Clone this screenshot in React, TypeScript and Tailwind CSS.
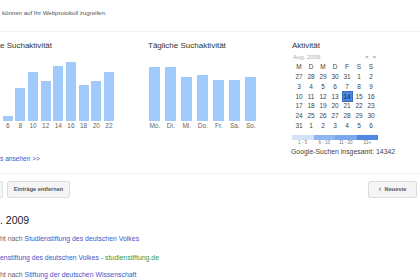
const hourly = [
  { label: "6", h: 5 },
  { label: "8", h: 33 },
  { label: "10", h: 49 },
  { label: "12", h: 40 },
  { label: "14", h: 55 },
  { label: "16", h: 59 },
  { label: "18", h: 36 },
  { label: "20", h: 40 },
  { label: "22", h: 49 },
];

const daily = [
  { label: "Mo.", h: 54 },
  { label: "Di.", h: 54 },
  { label: "Mi.", h: 44 },
  { label: "Do.", h: 46 },
  { label: "Fr.", h: 41 },
  { label: "Sa.", h: 41 },
  { label: "So.", h: 44 },
];

const weekdays = ["M", "D", "M", "D", "F", "S", "S"];
const days = [
  27, 28, 29, 30, 31, 1, 2,
  3, 4, 5, 6, 7, 8, 9,
  10, 11, 12, 13, 14, 15, 16,
  17, 18, 19, 20, 21, 22, 23,
  24, 25, 26, 27, 28, 29, 30,
  31, 1, 2, 3, 4, 5, 6,
];

function Bars({ data, width, gap }: { data: { label: string; h: number }[]; width: string; gap: string }) {
  return (
    <>
      <div className={`flex items-end h-[70.5px] ${gap}`}>
        {data.map((d) => (
          <div key={d.label} className={`${width} bg-[#a1c9f9]`} style={{ height: d.h }} />
        ))}
      </div>
      <div className={`flex h-[10px] ${gap}`}>
        {data.map((d) => (
          <div key={d.label} className={`${width} text-center text-[6.5px] leading-[10px] text-[#666] whitespace-nowrap flex justify-center`}>
            {d.label}
          </div>
        ))}
      </div>
    </>
  );
}

export default function App() {
  return (
    <main className="w-[420px] h-[280px] overflow-hidden bg-white text-[#222] font-['Liberation_Sans',Arial,sans-serif]">
      <div className="h-[32px] border-b border-[#f1f1f1] pt-[9px] pl-[2px] text-[6.1px] leading-[8px] text-[#555]">
        können auf Ihr Webprotokoll zugreifen.
      </div>

      <section className="flex h-[142px] border-b border-[#f1f1f1]">
        <div className="w-[148px] pt-[8.5px]">
          <h3 className="h-[10px] text-[8px] leading-[10px] text-[#333] whitespace-nowrap">e Suchaktivität</h3>
          <div className="pl-[2.7px]">
            <Bars data={hourly} width="w-[10px]" gap="gap-[2.67px]" />
          </div>
          <a className="block mt-[24px] text-[6.6px] leading-[8px] text-[#4455c8]">s ansehen &gt;&gt;</a>
        </div>

        <div className="w-[144px] pt-[8.5px]">
          <h3 className="h-[10px] text-[8px] leading-[10px] text-[#333] whitespace-nowrap">Tägliche Suchaktivität</h3>
          <div className="pl-[1.3px]">
            <Bars data={daily} width="w-[11px]" gap="gap-[5px]" />
          </div>
        </div>

        <div className="w-[110px] pt-[8.5px]">
          <h3 className="h-[10px] text-[8px] leading-[10px] text-[#333]">Aktivität</h3>
          <div className="mt-[2px] ml-[1px] w-[84px] flex justify-between h-[8px] text-[6px] leading-[8px]">
            <span className="text-[#aaa]">Aug. 2009</span>
            <span className="text-[#555] tracking-[1px]">&lt; &gt;</span>
          </div>
          <div className="mt-[1.6px] ml-[1px] grid grid-cols-7 w-[84px] auto-rows-[9.8px] text-[6.5px] text-[#444]">
            {weekdays.map((w, i) => (
              <div key={"w" + i} className="flex items-center justify-center">{w}</div>
            ))}
            {days.map((d, i) => (
              <div key={i} className="flex items-center justify-center">
                {i === 18 ? (
                  <span className="w-[11px] h-[10.6px] bg-[#4a86e0] border border-[#3a6cc0] flex items-center justify-center text-[#1a2a55]">
                    {d}
                  </span>
                ) : (
                  d
                )}
              </div>
            ))}
          </div>
          <div className="mt-[4.3px] flex w-[86px] h-[5.5px]">
            <div className="flex-1 bg-[#d3e2f8]" />
            <div className="flex-1 bg-[#8fb6f0]" />
            <div className="flex-1 bg-[#7ba8ec]" />
            <div className="flex-1 bg-[#4f88e2]" />
          </div>
          <div className="flex w-[86px] h-[5px] text-[4.5px] leading-[5px] text-[#777]">
            <span className="flex-1 text-center">1 - 5</span>
            <span className="flex-1 text-center">6 - 10</span>
            <span className="flex-1 text-center">11 - 20</span>
            <span className="flex-1 text-center">21+</span>
          </div>
          <p className="mt-[2.8px] -ml-[1px] text-[6.9px] leading-[8px] text-[#444] whitespace-nowrap">
            Google-Suchen insgesamt: 14342
          </p>
        </div>
      </section>

      <div className="flex justify-between items-center pt-[7px] pr-[3px]">
        <div className="flex items-center gap-[4px]">
          <div className="w-[3px] h-[17px] bg-[#f5f5f5] border border-l-0 border-[#e3e3e3]" />
          <button className="h-[17px] w-[63px] bg-[#f5f5f5] border border-[#dcdcdc] rounded-[2px] text-[5.6px] font-bold text-[#555]">
            Einträge entfernen
          </button>
        </div>
        <button className="h-[17px] w-[49px] bg-[#f5f5f5] border border-[#dcdcdc] rounded-[2px] text-[5.6px] font-bold text-[#555] flex items-center justify-center gap-[3px]">
          <span className="text-[9px] font-normal leading-none text-[#666]">‹</span>
          Neueste
        </button>
      </div>

      <h2 className="mt-[15px] h-[14px] text-[10.5px] leading-[14px] text-[#222]">. 2009</h2>

      <div className="text-[6.9px] leading-[10px] whitespace-nowrap">
        <p className="mt-[7px] text-[#666]">
          ht nach <a className="text-[#4455c8]">Studienstiftung des deutschen Volkes</a>
        </p>
        <p className="mt-[9px]">
          <a className="text-[#4455c8]">enstiftung des deutschen Volkes</a>
          <span className="text-[#666]"> - </span>
          <span className="text-[#3a963e]">studienstiftung.de</span>
        </p>
        <p className="mt-[7px] text-[#666]">
          ht nach <a className="text-[#4455c8]">Stiftung der deutschen Wissenschaft</a>
        </p>
      </div>
    </main>
  );
}
